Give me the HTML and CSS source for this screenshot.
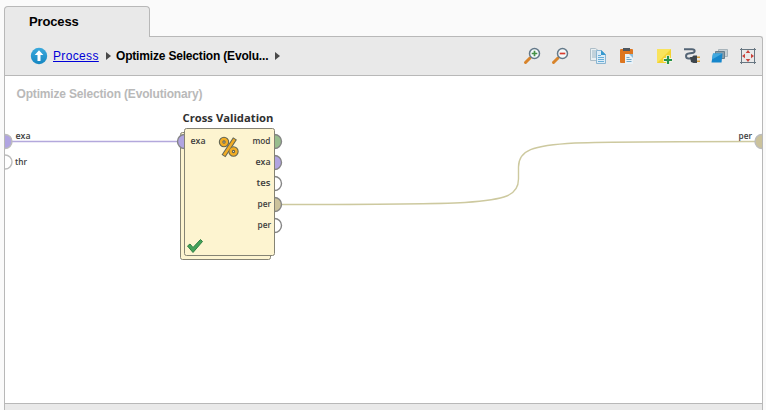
FILE: index.html
```html
<!DOCTYPE html>
<html lang="en">
<head>
<meta charset="utf-8">
<title>Process</title>
<link rel="stylesheet" href="styles.css">
</head>
<body>
<div class="app">
  <div class="tab">Process</div>
  <main class="panel">
    <header class="toolbar">
      <nav class="crumbs">
        <svg class="up" width="18" height="18" viewBox="0 0 18 18"><defs><linearGradient id="upfill" x2="0" y2="1"><stop stop-color="#3ba9dc"/><stop offset="1" stop-color="#1687c2"/></linearGradient></defs><circle cx="9" cy="9" r="8.2" fill="url(#upfill)"/><path d="M9 3.2 13.3 8H10.5v6h-3V8H4.700z" fill="#fff"/></svg>
        <a class="link" href="#">Process</a>
        <svg class="arrow" width="5" height="8" viewBox="0 0 5 8"><path d="M0 0 5 4 0 8z" fill="#494949"/></svg>
        <span class="current">Optimize Selection (Evolu...</span>
        <svg class="arrow" width="5" height="8" viewBox="0 0 5 8"><path d="M0 0 5 4 0 8z" fill="#494949"/></svg>
      </nav>
      <div class="tools">
        <svg width="18" height="18" viewBox="0 0 18 18"><path d="M2.500 15.500 7 11" stroke="#d8842b" stroke-width="3" stroke-linecap="round"/><circle cx="11.500" cy="6.500" r="5" fill="#f4fafa" stroke="#64798a" stroke-width="1.500"/><path d="M8.700 6.500h5.600M11.500 3.700v5.600" stroke="#459146" stroke-width="1.700"/></svg>
        <svg width="18" height="18" viewBox="0 0 18 18"><path d="M2.500 15.500 7 11" stroke="#d8842b" stroke-width="3" stroke-linecap="round"/><circle cx="11.500" cy="6.500" r="5" fill="#f4fafa" stroke="#64798a" stroke-width="1.500"/><path d="M8.700 6.500h5.600" stroke="#d83b2f" stroke-width="1.700"/></svg>
        <svg class="group" width="18" height="18" viewBox="0 0 18 18"><path d="M1.500 1.500h5l4 3v9h-9z" fill="#e8eff2" stroke="#adbdc7"/><path d="M3 4h4M3 6h4M3 8h4M3 10h4" stroke="#9bb5c4"/><path d="M7.500 3.500h5l4 4v9h-9z" fill="#dcecf7" stroke="#8bb5d1"/><path d="M12 3v5h5z" fill="#3799cf"/><path d="M9 8.500h3M9 10.500h6M9 12.500h6M9 14.500h6" stroke="#67aed8"/></svg>
        <svg width="18" height="18" viewBox="0 0 18 18"><rect x="3" y="2" width="13" height="14" rx="1" fill="#dd7620"/><path d="M6 4V1h7v3z" fill="#4d565e"/><rect x="8" y="7" width="8" height="10" fill="#e9f2f8"/><path d="M12 7h4v4z" fill="#8dbcd9"/><path d="M9.500 10.500h3M9.500 12.500h5M9.500 14.500h5" stroke="#70a8ca"/></svg>
        <svg class="group" width="18" height="18" viewBox="0 0 18 18"><path d="M2 2h14v10l-4 4H2z" fill="#f2d232"/><path d="M2 2h14L2 16z" fill="#f9e35c"/><path d="M8.500 13h9M13 8.500v9" stroke="#f6f6e8" stroke-width="4"/><path d="M9 13h8M13 9v8" stroke="#269449" stroke-width="2.200"/></svg>
        <svg width="18" height="18" viewBox="0 0 18 18"><path d="M1 2.200h8c3.500 0 3.500 3.300 0 3.700L5.500 6.500c-3.500.5-3 5 0 5h3" fill="none" stroke="#536475" stroke-width="2"/><path d="M7 10h2l1.500-1.500h3.500V16h-3.500L8 15z" fill="#3d454c"/><path d="M14 10.300h3M14 14.300h3" stroke="#d99e3b" stroke-width="1.600"/></svg>
        <svg width="18" height="18" viewBox="0 0 18 18"><path d="M7.500 2.500h9v7h-9z" fill="#c7d0d5" stroke="#a8b4bb"/><path d="M4.500 4.500h9v7h-9z" fill="#889da9" stroke="#657e8d"/><path d="M2 6.500h9.500l-1 9H.5z" fill="#1686cb"/><path d="M2 6.500h9.500L1 12.500z" fill="#42a9df"/></svg>
        <svg width="18" height="18" viewBox="0 0 18 18"><path d="M2.500 1v16M15.500 1v16M1 2.500h16M1 15.500h16" stroke="#687782"/><path d="m9 3 2.300 3H6.700zM9 15l2.300-3H6.700zM3 9l3-2.300v4.600zM15 9l-3-2.300v4.600z" fill="#c9443c"/></svg>
      </div>
    </header>
    <section class="canvas">
      <svg class="diagram" width="757" height="327" viewBox="5 76 757 327">
        <text class="title" x="16.500" y="98" textLength="186">Optimize Selection (Evolutionary)</text>

        <path class="wire violet" d="M12 141.500H178"/>
        <path class="wire khaki" d="M282 204.500C370 204.500 430 204.500 465 202.500C505 199.500 518.500 196 518.500 179V167C518.500 150 532 145.500 575 143C620 141.500 680 141.500 755 141.500"/>

        <g class="edge-port">
          <path class="violet-fill" d="M5 134.500a7 7 0 0 1 0 14"/>
          <path class="empty" d="M5 155a7 7 0 0 1 0 14"/>
          <path class="khaki-fill" d="M762 134.500a7 7 0 0 0 0 14"/>
        </g>
        <text class="port" x="15.500" y="139" textLength="15" lengthAdjust="spacingAndGlyphs">exa</text>
        <text class="port" x="15" y="165" textLength="12" lengthAdjust="spacingAndGlyphs">thr</text>
        <text class="port" x="738.500" y="139" textLength="13.500" lengthAdjust="spacingAndGlyphs">per</text>

        <text class="name" x="182.500" y="122" textLength="91" lengthAdjust="spacingAndGlyphs">Cross Validation</text>
        <rect class="box" x="180.500" y="132.500" width="90" height="127" rx="2"/>
        <g class="node-port">
          <path class="green-fill" d="M274.500 134.500a7 7 0 0 1 0 14"/>
          <path class="violet-fill" d="M184.500 134.500a7 7 0 0 0 0 14"/>
          <path class="violet-fill" d="M274.500 155.500a7 7 0 0 1 0 14"/>
          <path class="empty" d="M274.500 176.500a7 7 0 0 1 0 14"/>
          <path class="khaki-fill" d="M274.500 197.500a7 7 0 0 1 0 14"/>
          <path class="empty" d="M274.500 218.500a7 7 0 0 1 0 14"/>
        </g>
        <rect class="box" x="184.500" y="128.500" width="90" height="127" rx="2"/>
        <text class="port" x="190.500" y="144" textLength="15" lengthAdjust="spacingAndGlyphs">exa</text>
        <text class="port" x="252.500" y="144" textLength="18" lengthAdjust="spacingAndGlyphs">mod</text>
        <text class="port" x="255.500" y="165" textLength="15" lengthAdjust="spacingAndGlyphs">exa</text>
        <text class="port" x="256.500" y="186" textLength="14" lengthAdjust="spacingAndGlyphs">tes</text>
        <text class="port" x="257.500" y="207" textLength="13.500" lengthAdjust="spacingAndGlyphs">per</text>
        <text class="port" x="257.500" y="228" textLength="13.500" lengthAdjust="spacingAndGlyphs">per</text>
        <g fill="none" stroke="#5f6456" stroke-width="4.600"><circle cx="224" cy="142" r="2.900"/><circle cx="233.500" cy="151.500" r="2.900"/><path d="m235 138.500-11.500 17.500"/></g>
        <g fill="none" stroke="#f1ac25" stroke-width="2.500"><circle cx="224" cy="142" r="2.900"/><circle cx="233.500" cy="151.500" r="2.900"/><path d="m234.500 139.200-10.500 16.100"/></g>
        <path d="m187.500 246 2.500-2 3 3.500 7.500-8 2 2-9.500 11z" fill="#43a25a" stroke="#2f7f43" stroke-linejoin="round"/>
      </svg>
    </section>
    <footer class="strip"></footer>
  </main>
</div>
</body>
</html>
```

FILE: styles.css
```css
* { box-sizing: border-box; }
body {
  margin: 0;
  background: #fff;
  font-family: "Liberation Sans", Arial, sans-serif;
}
.app {
  display: flex;
  flex-direction: column;
  height: 410px;
  padding: 6px 3px 0 4px;
  background: #fafafa;
}
.tab {
  width: 146px;
  height: 31px;
  margin-bottom: -1px;
  padding-left: 24px;
  border: 1px solid #b8b8b8;
  border-bottom: 0;
  border-radius: 4px 4px 0 0;
  background: #e9e9e9;
  font-size: 13px;
  font-weight: bold;
  letter-spacing: -.15px;
  line-height: 30px;
  z-index: 1;
}
.panel {
  display: flex;
  flex: 1;
  flex-direction: column;
  border: 1px solid #b8b8b8;
  border-bottom: 0;
  border-top-right-radius: 3px;
  background: #e9e9e9;
}
.toolbar {
  display: flex;
  align-items: center;
  justify-content: space-between;
  height: 39px;
  padding: 0 5px 0 25px;
  border-bottom: 1px solid #b8b8b8;
}
.crumbs { display: flex; align-items: center; font-size: 12px; line-height: 16px; white-space: nowrap; }
.link { width: 46px; margin: 0 7px 0 5px; color: #0000d8; letter-spacing: .35px; }
.current { width: 153px; margin: 0 6px 0 5px; font-weight: bold; letter-spacing: -.18px; }
.tools { display: flex; gap: 10px; }
.group { margin-left: 10px; }
.canvas { height: 327px; background: #fff; }
.diagram { display: block; }
.strip { flex: 1; border-top: 1px solid #b8b8b8; }
.title { fill: #b9b9b9; font-size: 12px; font-weight: bold; }
.name { fill: #303030; font-family: "Open Sans", sans-serif; font-size: 11px; font-weight: bold; }
.port { fill: #3c3c3c; font-family: "Open Sans", sans-serif; font-size: 9px; font-weight: 600; }
.wire { fill: none; stroke-width: 1.4; }
.violet { stroke: #b3a8dc; }
.khaki { stroke: #cdc99f; }
.violet-fill { fill: #b0a4e1; }
.green-fill { fill: #98bd8e; }
.khaki-fill { fill: #cbc29b; }
.empty { fill: #fff; }
.edge-port { stroke: #bcbcbc; stroke-width: 1.4; }
.node-port { stroke: #858585; stroke-width: 1.4; }
.box { fill: #fdf4d0; stroke: #858374; }
```
